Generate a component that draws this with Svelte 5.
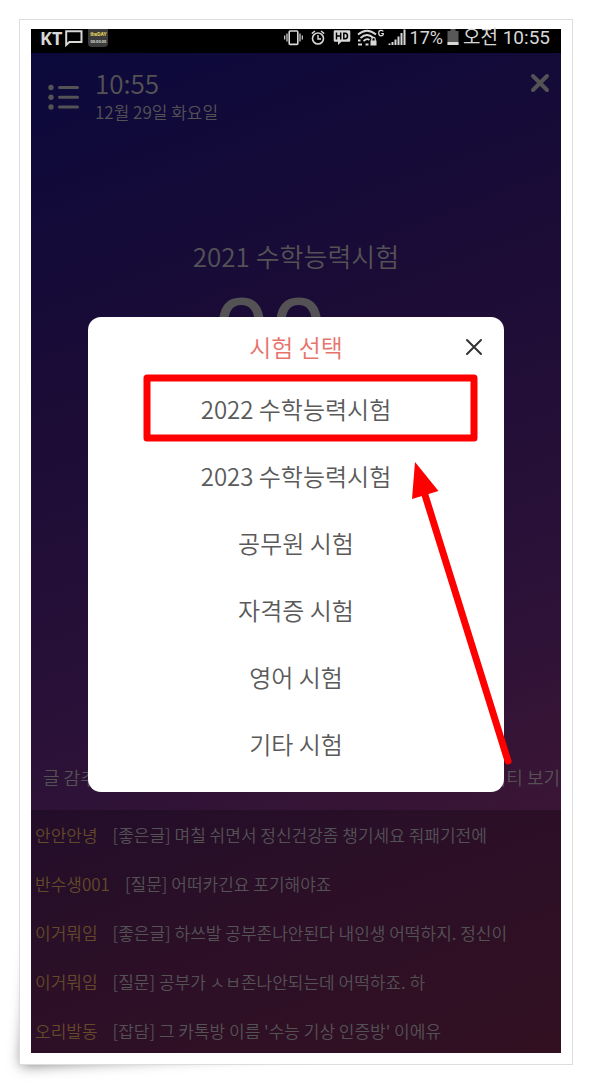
<script>
  let open = $state(true);

  const exams = [
    '2022 수학능력시험',
    '2023 수학능력시험',
    '공무원 시험',
    '자격증 시험',
    '영어 시험',
    '기타 시험'
  ];

  const posts = [
    { name: '안안안녕', text: '[좋은글] 며칠 쉬면서 정신건강좀 챙기세요 줘패기전에' },
    { name: '반수생001', text: '[질문] 어떠카긴요 포기해야죠' },
    { name: '이거뭐임', text: '[좋은글] 하쓰발 공부존나안된다 내인생 어떡하지. 정신이' },
    { name: '이거뭐임', text: '[질문] 공부가 ㅅㅂ존나안되는데 어떡하죠. 하' },
    { name: '오리발동', text: "[잡담] 그 카톡방 이름 '수능 기상 인증방' 이에유" }
  ];
</script>

<main class="frame">
  <div class="screen">
    <div class="status">
      <strong class="carrier">KT</strong>
      <svg class="bubble" width="18" height="18" viewBox="0 0 18 18" fill="none" stroke="currentColor" stroke-width="2">
        <path d="M1.2 16V2.2H16.5V13H4.4Z" />
      </svg>
      <span class="badge"><b>theDAY</b><i>00:00:00</i></span>

      <div class="right">
        <svg class="vibrate" width="19" height="18" viewBox="0 0 19 18" fill="none" stroke="currentColor">
          <rect x="5.2" y="2" width="8.6" height="13.4" rx="1" stroke-width="1.6" />
          <path d="M3 4.5v8M.7 6.5v4M16 4.5v8M18.3 6.5v4" stroke-width="1.2" />
        </svg>
        <svg class="alarm" width="14" height="18" viewBox="0 0 14 18" fill="none" stroke="currentColor" stroke-width="1.6">
          <circle cx="7" cy="9.5" r="5.5" />
          <path d="M7 6v4h3M.8 4.6 4 2M13.2 4.6 10 2" stroke-width="1.4" />
        </svg>
        <svg class="hd" width="18" height="18" viewBox="0 0 18 18">
          <path d="M2 1.2h14q1.3 0 1.3 1.3v9q0 1.3-1.3 1.3H8.4L5 16v-3.2H2Q.7 12.8.7 11.5v-9Q.7 1.2 2 1.2Z" fill="currentColor" />
          <path d="M3.5 3.5v7M7.7 3.5v7M3.5 7h4.2M10.8 4.2h1.300q2.400 0 2.400 2.800t-2.400 2.800h-1.300Z" fill="none" stroke="#000" stroke-width="1.500" />
        </svg>
        <svg class="wifi" width="28" height="18" viewBox="0 0 28 18" fill="none" stroke="currentColor" stroke-width="1.800">
          <path d="M1 5.500Q10 -2 19 5.500M3.500 9Q10 3 16.500 9M6.500 12Q10 9 12.500 11" />
          <path d="M1 11.500h2.500M1 15.500h4M8.500 15.500h3" />
          <rect x="13.500" y="11.500" width="6" height="5" fill="currentColor" stroke="none" />
          <path d="M14.800 12v-2q0-1.600 1.700-1.600t1.700 1.600v2" stroke-width="1.200" />
          <path d="M26.300 2.400Q25.500 1.300 24 1.300Q21.700 1.300 21.700 4T24 6.800Q26.400 6.800 26.400 4.500H24.200" stroke-width="1.200" />
        </svg>
        <svg class="signal" width="18" height="18" viewBox="0 0 18 18" fill="none" stroke="currentColor" stroke-width="2">
          <path d="M1.500 16v-1.500M4.500 16v-3M7.500 16v-5.500M10.500 16V7.500M13.500 16V4M16.500 16V.5" />
        </svg>
        <span class="percent">17%</span>
        <svg class="battery" width="12" height="18" viewBox="0 0 12 18">
          <path d="M3.500 0h5v2H11.500V16H.5V2h3Z" fill="#585858" />
          <path d="M.5 13h11v3H.5Z" fill="#d8d8d8" />
        </svg>
        <span class="clock">오전 10:55</span>
      </div>
    </div>

    <div class="app">
      <header>
        <button class="plain" aria-label="메뉴">
          <svg width="32" height="26" viewBox="0 0 32 26" fill="currentColor">
            <circle cx="3" cy="3.500" r="2.700" />
            <circle cx="3" cy="13.200" r="2.700" />
            <circle cx="3" cy="23" r="2.700" />
            <path d="M11.500 3.500h18M11.500 13.200h18M11.500 23h18" stroke="currentColor" stroke-width="3" stroke-linecap="round" />
          </svg>
        </button>
        <div class="today">
          <div class="time">10:55</div>
          <div class="date">12월 29일 화요일</div>
        </div>
        <button class="plain quit" aria-label="닫기">
          <svg width="20" height="20" viewBox="0 0 20 20" fill="none" stroke="currentColor" stroke-width="4" stroke-linecap="round">
            <path d="M3 3 17 17M17 3 3 17" />
          </svg>
        </button>
      </header>

      <section class="count">
        <h1>2021 수학능력시험</h1>
        <div class="days">00</div>
      </section>

      <nav>
        <button class="plain">글 감추기</button>
        <button class="plain">커뮤니티 보기</button>
      </nav>

      <ul class="posts">
        {#each posts as post}
          <li><span class="name">{post.name}</span><span>{post.text}</span></li>
        {/each}
      </ul>

      {#if open}
        <div class="overlay">
          <div class="dialog" role="dialog" aria-labelledby="dialog-title">
            <h2 id="dialog-title">시험 선택</h2>
            <button class="plain close" aria-label="닫기" onclick={() => (open = false)}>
              <svg width="18" height="18" viewBox="0 0 18 18" fill="none" stroke="currentColor" stroke-width="2" stroke-linecap="round">
                <path d="M2 2 16 16M16 2 2 16" />
              </svg>
            </button>
            {#each exams as exam}
              <button class="plain exam">{exam}</button>
            {/each}
            <svg class="marks" width="416" height="475" viewBox="0 0 416 475" fill="none" stroke="#f00" stroke-width="7">
              <rect x="59" y="61" width="327" height="60" stroke-linejoin="round" />
              <path d="M337 178 420 444" stroke-linecap="round" />
              <path d="M327 145 324 182 350.500 174Z" fill="#f00" stroke="none" />
            </svg>
          </div>
        </div>
      {/if}
    </div>
  </div>
</main>

<style>
  :global(body) {
    background: #fff;
  }

  .frame {
    position: relative;
    z-index: 0;
    margin: 19px;
    font-family: "Noto Sans CJK KR", sans-serif;
    font-weight: 350;
  }

  /* lifted paper corner */
  .frame::before {
    content: "";
    position: absolute;
    z-index: -1;
    left: 9px;
    bottom: 9px;
    width: 50%;
    height: 120px;
    box-shadow: 0 0 14px 2px #777;
    transform: rotate(-3deg) skewX(-8deg);
  }

  .screen {
    display: flex;
    flex-direction: column;
    box-sizing: border-box;
    min-height: calc(100vh - 38px);
    padding: 9px 11px 11px;
    border: 1px solid #ddd;
    background: #fff;
  }

  .status {
    display: flex;
    align-items: center;
    padding: 0 11px 6px 9px;
    background: #000;
    color: #d8d8d8;
    font-family: Roboto, "Noto Sans CJK KR", sans-serif;
    font-size: 19px;
    font-weight: 400;
    line-height: 18px;
    white-space: nowrap;
  }

  .status svg {
    flex: none;
  }

  .carrier {
    font-family: "Open Sans", sans-serif;
    font-size: 18px;
  }

  .bubble {
    margin-left: 3px;
  }

  .badge {
    display: flex;
    flex-direction: column;
    align-items: center;
    justify-content: center;
    width: 20px;
    height: 18px;
    margin-left: 5px;
    border-radius: 0 0 4px 4px;
    background: #3c3c3c;
    font-size: 5px;
    line-height: 7px;
  }

  .badge b {
    color: #e8d860;
  }

  .badge i {
    font-style: normal;
    font-weight: bold;
    font-size: 4px;
  }

  .right {
    display: flex;
    align-items: center;
    margin-left: auto;
  }

  .alarm,
  .hd {
    margin-left: 8px;
  }

  .wifi {
    margin-left: 6px;
  }

  .signal {
    margin-left: 3px;
  }

  .percent {
    margin-left: 4px;
    font-size: 18px;
  }

  .battery,
  .clock {
    margin-left: 4px;
  }

  .app {
    position: relative;
    display: flex;
    flex: 1;
    flex-direction: column;
    background: linear-gradient(160deg, #0b093b 0%, #1c0c36 32%, #2a1138 58%, #3b1535 80%, #43162d 100%);
    color: #555256;
  }

  .plain {
    padding: 0;
    border: 0;
    background: none;
    color: inherit;
    font: inherit;
    cursor: pointer;
  }

  .plain svg {
    display: block;
  }

  header {
    display: flex;
    align-items: center;
    padding: 15px 11px 0 17px;
  }

  .today {
    margin-left: 15px;
  }

  .time {
    font-size: 26px;
    line-height: 30px;
  }

  .date {
    font-size: 17px;
    line-height: 28px;
  }

  .quit {
    align-self: flex-start;
    margin: 5px 0 0 auto;
  }

  .count {
    text-align: center;
  }

  h1,
  h2 {
    margin: 0;
    font-weight: 350;
  }

  h1 {
    margin-top: 110px;
    font-size: 26px;
    line-height: 40px;
  }

  .days {
    padding-right: 52px;
    font-family: Roboto, sans-serif;
    font-size: 102px;
    font-weight: 400;
    line-height: 120px;
  }

  nav {
    display: flex;
    justify-content: space-between;
    margin-top: auto;
    padding: 0 1px 18px 12px;
    font-size: 18px;
    line-height: 30px;
  }

  .posts {
    margin: 0;
    padding: 0;
    overflow: hidden;
    background: rgba(0, 0, 0, 0.25);
    font-size: 17px;
    line-height: 25px;
    list-style: none;
  }

  li {
    display: flex;
    gap: 15px;
    padding: 12px 4px;
    white-space: nowrap;
  }

  li:last-child {
    padding-bottom: 10px;
  }

  .name {
    color: #64492a;
  }

  .overlay {
    position: absolute;
    inset: 0;
    display: grid;
    align-items: center;
    padding: 3px 57px 0;
  }

  .dialog {
    position: relative;
    display: flex;
    flex-direction: column;
    padding-bottom: 15px;
    border-radius: 13px;
    background: #fff;
    color: #5a5a5a;
    font-size: 24px;
    text-align: center;
  }

  h2 {
    padding-top: 2px;
    color: #e8736c;
    font-size: 24px;
    line-height: 56px;
  }

  .exam {
    line-height: 67px;
  }

  .close {
    position: absolute;
    top: 21px;
    right: 21px;
    color: #333;
  }

  .marks {
    position: absolute;
    top: 0;
    left: 0;
    overflow: visible;
    pointer-events: none;
  }
</style>
